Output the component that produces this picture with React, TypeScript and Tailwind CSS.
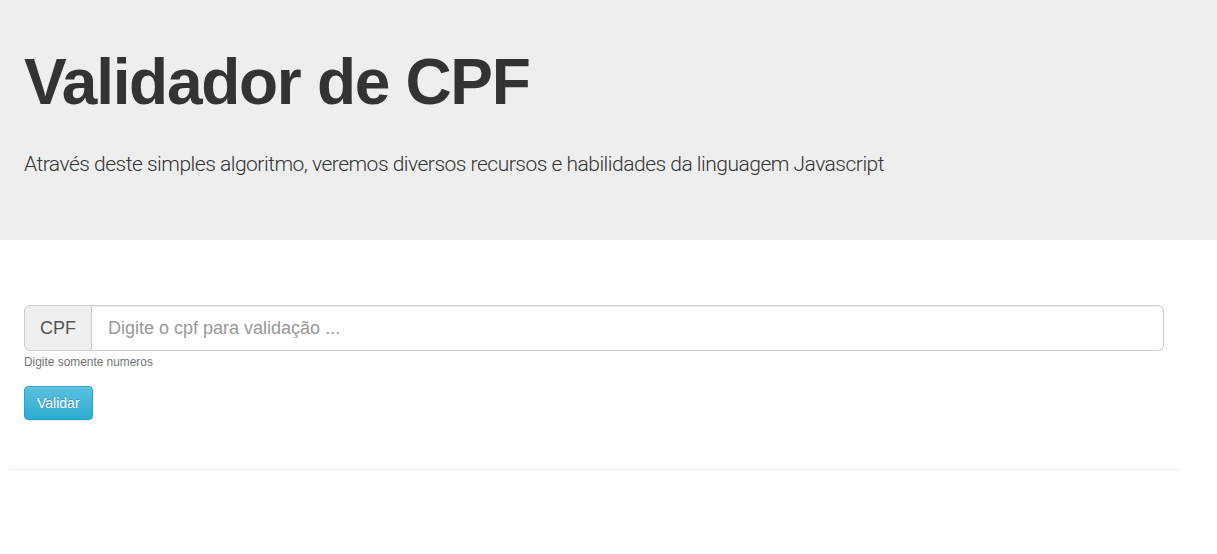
import React from "react";

export default function App() {
  return (
    <div className="min-h-[554px] bg-white font-['Liberation_Sans',Arial,sans-serif] text-[#333]">
      {/* Jumbotron */}
      <div className="bg-[#eeeeee] pt-[48px] pb-[48px]">
        <div className="px-[24px]">
          <h1 className="m-0 text-[64px] leading-[69px] font-bold tracking-[-1.3px]">
            Validador de CPF
          </h1>
          <p className="mt-[32px] mb-[13px] text-[21px] leading-[30px] font-light tracking-[-0.5px] font-['Roboto',sans-serif]">
            Através deste simples algoritmo, veremos diversos recursos e habilidades da linguagem Javascript
          </p>
        </div>
      </div>

      {/* Form */}
      <div className="w-[1170px] ml-[9px] px-[15px] pt-[65px]">
        <div className="flex h-[46px] w-full">
          <span className="flex items-center justify-center w-[68px] bg-[#eeeeee] border border-[#cccccc] rounded-l-[6px] text-[18px] text-[#555]">
            CPF
          </span>
          <input
            type="text"
            placeholder="Digite o cpf para validação ..."
            className="flex-1 min-w-0 border border-l-0 border-[#cccccc] rounded-r-[6px] px-[16px] text-[18px] text-[#555] placeholder:text-[#999] outline-none shadow-[inset_0_1px_1px_rgba(0,0,0,0.075)]"
          />
        </div>
        <p className="mt-[3px] mb-0 text-[11.9px] leading-[17px] text-[#737373]">
          Digite somente numeros
        </p>
        <button
          type="button"
          className="mt-[15px] h-[34px] px-[12px] text-[14px] text-white rounded-[4px] border border-[#28a4c9] bg-gradient-to-b from-[#5bc0de] to-[#2aabd2] shadow-[inset_0_1px_0_rgba(255,255,255,0.15),0_1px_1px_rgba(0,0,0,0.075)] [text-shadow:0_-1px_0_rgba(0,0,0,0.2)]"
        >
          Validar
        </button>
      </div>
      <hr className="w-[1170px] ml-[9px] mt-[49px] border-0 border-t border-[#eeeeee]" />
    </div>
  );
}
